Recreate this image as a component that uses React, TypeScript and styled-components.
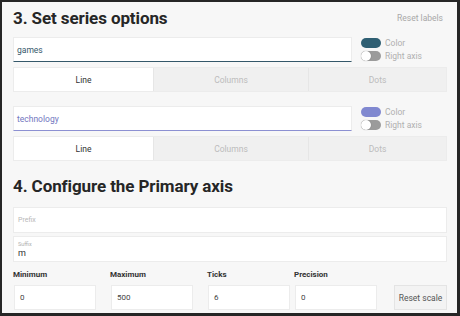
import styled, { createGlobalStyle } from "styled-components";

const GlobalStyle = createGlobalStyle`
    html, body {
        margin: 0;
        padding: 0;
        background: #f7f7f7;
    }
    * {
        box-sizing: border-box;
    }
`

const Frame = styled.div`
    width: 460px;
    height: 316px;
    border: 2px solid #262626;
    border-right-width: 3px;
    border-bottom-width: 3px;
    background: #f7f7f7;
    padding: 0 10px 0 11px;
    font-family: Roboto, "Liberation Sans", sans-serif;
    overflow: hidden;
`

const HeaderRow = styled.div`
    display: flex;
    align-items: center;
    justify-content: space-between;
    height: ${p => p.$h}px;
    padding-top: ${p => p.$pt || 0}px;
    padding-bottom: ${p => p.$pb || 0}px;
`

const Title = styled.h2`
    margin: 0;
    font-size: 17px;
    font-weight: 700;
    color: #262626;
    letter-spacing: -0.1px;
`

const ResetLink = styled.span`
    font-size: 8.5px;
    color: #a8a8a8;
    margin-right: 4px;
`

const Series = styled.div`
    display: flex;
    flex-direction: column;
    gap: 5px;
    margin-bottom: ${p => p.$mb}px;
`

const SeriesTop = styled.div`
    display: flex;
    gap: 9px;
`

const NameInput = styled.div`
    width: 339px;
    height: 25px;
    background: #fff;
    border: 1px solid #ececec;
    border-bottom: 1.5px solid ${p => p.$accent};
    display: flex;
    align-items: center;
    padding: 1px 3px 0;
    font-size: 8.5px;
    color: ${p => p.$text};
`

const Toggles = styled.div`
    display: flex;
    flex-direction: column;
    gap: 3px;
    padding-top: 1px;
`

const ToggleRow = styled.div`
    display: flex;
    align-items: center;
    gap: 4px;
    font-size: 8.5px;
    color: #b0b0b0;
`

const Track = styled.div`
    position: relative;
    width: 20px;
    height: 10px;
    border-radius: 5px;
    background: ${p => p.$color};
`

const Knob = styled.div`
    position: absolute;
    left: 0;
    top: 0;
    width: 10px;
    height: 10px;
    border-radius: 50%;
    background: #fff;
    box-shadow: 0 0 1px rgba(0, 0, 0, 0.4);
`

const Tabs = styled.div`
    display: grid;
    grid-template-columns: 139px 155px 1fr;
    height: 25px;
    width: 434px;
    border: 1px solid #ececec;
`

const Tab = styled.div`
    display: flex;
    align-items: center;
    justify-content: center;
    font-size: 8.5px;
    background: ${p => (p.$active ? "#fff" : "#f0f0f0")};
    color: ${p => (p.$active ? "#333" : "#bcbcbc")};
    border-left: ${p => (p.$first ? "none" : "1px solid #e6e6e6")};
`

const Field = styled.div`
    width: 434px;
    height: 26px;
    background: #fff;
    border: 1px solid #ececec;
    display: flex;
    flex-direction: column;
    justify-content: center;
    padding: 0 4px;
    margin-bottom: 3px;
`

const Placeholder = styled.span`
    font-size: 7px;
    color: #b8b8b8;
`

const TinyLabel = styled.span`
    font-size: 5.5px;
    color: #b0b0b0;
    line-height: 7px;
`

const Value = styled.span`
    font-size: 9px;
    color: #333;
    line-height: 10px;
`

const AxisRow = styled.div`
    display: grid;
    grid-template-columns: 97px 97px 87px 82px 1fr;
    margin-top: 5px;
`

const AxisCol = styled.div`
    display: flex;
    flex-direction: column;
    justify-content: flex-end;
    gap: 4px;
`

const AxisLabel = styled.div`
    font-size: 8px;
    font-weight: 700;
    color: #333;
    height: 14px;
    display: flex;
    align-items: center;
`

const NumInput = styled.div`
    width: 82px;
    height: 25px;
    margin-left: 1px;
    background: #fff;
    border: 1px solid #ececec;
    display: flex;
    align-items: center;
    padding: 0 5px;
    font-size: 8px;
    color: #444;
`

const ResetButton = styled.button`
    align-self: flex-end;
    width: 53px;
    height: 25px;
    background: #f3f3f3;
    border: 1px solid #e4e4e4;
    font-family: Roboto, "Liberation Sans", sans-serif;
    font-size: 8.5px;
    color: #555;
    padding: 0;
`

const series = [
    { name: "games", accent: "#35586a", text: "#35586a", color: "#2f5f73", mb: 14 },
    { name: "technology", accent: "#8c90d2", text: "#7377c0", color: "#8088d0", mb: 0 },
]

const axes = [
    { label: "Minimum", value: "0" },
    { label: "Maximum", value: "500" },
    { label: "Ticks", value: "6" },
    { label: "Precision", value: "0" },
]

const Toggle = ({ color, on }: { color: string, on: boolean }) => (
    <Track $color={color}>{!on && <Knob />}</Track>
)

const App = () => {
    return <Frame>
        <GlobalStyle />
        <HeaderRow $h={35} $pb={4}>
            <Title>3. Set series options</Title>
            <ResetLink>Reset labels</ResetLink>
        </HeaderRow>
        {series.map(s => (
            <Series key={s.name} $mb={s.mb}>
                <SeriesTop>
                    <NameInput $accent={s.accent} $text={s.text}>{s.name}</NameInput>
                    <Toggles>
                        <ToggleRow><Toggle color={s.color} on />Color</ToggleRow>
                        <ToggleRow><Toggle color="#9b9b9b" on={false} />Right axis</ToggleRow>
                    </Toggles>
                </SeriesTop>
                <Tabs>
                    <Tab $active $first>Line</Tab>
                    <Tab>Columns</Tab>
                    <Tab>Dots</Tab>
                </Tabs>
            </Series>
        ))}
        <HeaderRow $h={46} $pt={4}>
            <Title>4. Configure the Primary axis</Title>
        </HeaderRow>
        <Field>
            <Placeholder>Prefix</Placeholder>
        </Field>
        <Field>
            <TinyLabel>Suffix</TinyLabel>
            <Value>m</Value>
        </Field>
        <AxisRow>
            {axes.map(a => (
                <AxisCol key={a.label}>
                    <AxisLabel>{a.label}</AxisLabel>
                    <NumInput>{a.value}</NumInput>
                </AxisCol>
            ))}
            <AxisCol>
                <ResetButton>Reset scale</ResetButton>
            </AxisCol>
        </AxisRow>
    </Frame>
}

export default App;
